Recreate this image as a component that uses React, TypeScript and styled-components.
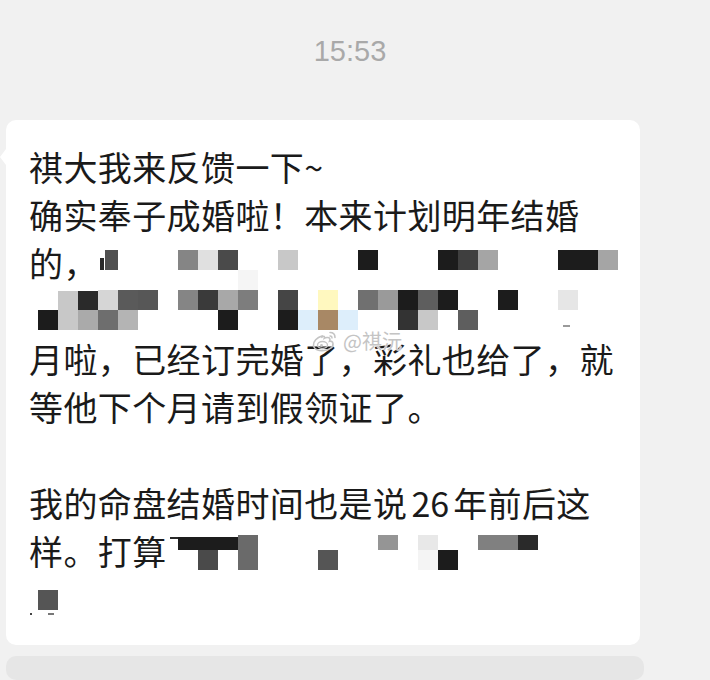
import React from "react";
import styled, { createGlobalStyle } from "styled-components";

const GlobalStyle = createGlobalStyle`
  html, body {
    margin: 0;
    padding: 0;
    background: #f1f1f1;
  }
  body {
    font-family: "Noto Sans CJK SC", "Noto Sans", sans-serif;
  }
`;

const Page = styled.div`
  width: 710px;
  height: 680px;
  overflow: hidden;
  background: #f1f1f1;
  display: flex;
  flex-direction: column;
`;

const TimeStamp = styled.div`
  width: 700px;
  margin-top: 34px;
  height: 34px;
  line-height: 34px;
  text-align: center;
  font-family: "Liberation Sans", Arial, sans-serif;
  font-size: 29px;
  color: #a9a9a9;
`;

const Bubble = styled.div`
  position: relative;
  margin-top: 52px;
  margin-left: 6px;
  width: 634px;
  box-sizing: border-box;
  padding: 23px 20px 22px 23px;
  background: #ffffff;
  border-radius: 10px;

  &::before {
    content: "";
    position: absolute;
    left: -6px;
    top: 29px;
    border-top: 8px solid transparent;
    border-bottom: 8px solid transparent;
    border-right: 6px solid #ffffff;
  }
`;

const Line = styled.div`
  height: 48px;
  line-height: 48px;
  font-size: 34px;
  letter-spacing: 0.4px;
  color: #1a1a1a;
  white-space: nowrap;
`;

const Num = styled.span`
  padding: 0 4px;
  letter-spacing: 0;
`;

const Mosaic = styled.svg`
  position: absolute;
  left: 0;
  top: 0;
  width: 634px;
  height: 525px;
  pointer-events: none;
`;

const Watermark = styled.div`
  position: absolute;
  left: 305px;
  top: 206px;
  display: flex;
  align-items: center;
  gap: 4px;
  font-size: 20px;
  color: #c4c4c4;
  text-shadow: 0 0 1px #fff, 0 0 1px #fff;
`;

const NextBubble = styled.div`
  margin-top: 11px;
  margin-left: 6px;
  width: 638px;
  height: 60px;
  background: #e6e6e6;
  border-radius: 10px;
`;

type Cell = [number, number, number, number, string];

// page coordinates; converted to bubble coordinates (bubble at 6,120)
const cells: Cell[] = [
  // row A
  [100, 258, 4, 12, "#2a2a2a"],
  [105, 250, 13, 20, "#505050"],
  [178, 250, 20, 20, "#858585"],
  [198, 250, 20, 20, "#e0e0e0"],
  [218, 250, 20, 20, "#4a4a4a"],
  [278, 250, 20, 20, "#c8c8c8"],
  [358, 250, 20, 20, "#1c1c1c"],
  [438, 250, 20, 20, "#1c1c1c"],
  [458, 250, 20, 20, "#3f3f3f"],
  [478, 250, 20, 20, "#a5a5a5"],
  [558, 250, 40, 20, "#1c1c1c"],
  [598, 250, 20, 20, "#a5a5a5"],
  // row B
  [238, 270, 20, 20, "#f5f5f5"],
  // row C
  [58, 291, 20, 19, "#c8c8c8"],
  [78, 291, 20, 19, "#2a2a2a"],
  [98, 290, 20, 20, "#d6d6d6"],
  [118, 290, 20, 20, "#5a5a5a"],
  [138, 290, 20, 20, "#575757"],
  [178, 290, 20, 20, "#858585"],
  [198, 290, 20, 20, "#3a3a3a"],
  [218, 290, 20, 20, "#a8a8a8"],
  [238, 290, 20, 20, "#7d7d7d"],
  [278, 290, 20, 20, "#454545"],
  [318, 290, 20, 20, "#fff8bf"],
  [358, 290, 20, 20, "#707070"],
  [378, 290, 20, 20, "#9a9a9a"],
  [398, 290, 20, 20, "#1c1c1c"],
  [418, 290, 20, 20, "#5e5e5e"],
  [438, 290, 20, 20, "#1c1c1c"],
  [498, 290, 20, 20, "#1c1c1c"],
  [558, 290, 20, 20, "#e6e6e6"],
  // row D
  [38, 310, 20, 20, "#1c1c1c"],
  [58, 310, 20, 20, "#c8c8c8"],
  [78, 310, 20, 20, "#aaaaaa"],
  [98, 310, 20, 20, "#6e6e6e"],
  [118, 310, 20, 20, "#b4b4b4"],
  [218, 310, 20, 20, "#1c1c1c"],
  [278, 310, 20, 20, "#1c1c1c"],
  [298, 310, 20, 20, "#ddeefb"],
  [318, 310, 20, 20, "#a88865"],
  [338, 310, 20, 20, "#ddeefb"],
  [398, 310, 20, 20, "#333333"],
  [418, 310, 20, 20, "#c8c8c8"],
  [458, 310, 20, 20, "#5e5e5e"],
  [563, 325, 7, 2, "#9a9a9a"],
  // line 9
  [170, 537, 8, 2, "#2a2a2a"],
  [178, 537, 60, 13, "#1c1c1c"],
  [238, 535, 20, 35, "#6a6a6a"],
  [198, 550, 20, 20, "#4a4a4a"],
  [318, 550, 20, 20, "#555555"],
  [378, 535, 20, 15, "#959595"],
  [418, 535, 20, 15, "#e8e8e8"],
  [418, 550, 20, 20, "#f4f4f4"],
  [438, 550, 20, 20, "#1c1c1c"],
  [478, 535, 40, 15, "#808080"],
  [518, 535, 20, 15, "#2a2a2a"],
  // line 10
  [38, 590, 20, 20, "#555555"],
  [30, 613, 2, 2, "#444444"],
  [48, 613, 6, 2, "#777777"],
];

const WeiboLogo = () => (
  <svg width="28" height="24" viewBox="0 0 28 24" fill="none">
    <path
      d="M11 7c-5 1.5-9 5.5-8.5 9.5C3 20.5 8 22 13 21.5c5.5-.5 9.5-3.5 9-7-.3-2-2-2.7-3.5-2.3 1-2.3.3-4-2.5-3.7-1.5.2-2.7.8-2.7.8.6-1.6.3-2.7-2.3-1.3z"
      stroke="#c4c4c4"
      strokeWidth="1.6"
    />
    <ellipse cx="11.5" cy="16" rx="5" ry="3.5" stroke="#c4c4c4" strokeWidth="1.4" />
    <circle cx="10.5" cy="16.5" r="1.4" fill="#c4c4c4" />
    <path d="M19 3.5c3 0 5 2 5 5" stroke="#c4c4c4" strokeWidth="1.6" strokeLinecap="round" />
    <path d="M19 7c1.2 0 2 .8 2 2" stroke="#c4c4c4" strokeWidth="1.4" strokeLinecap="round" />
  </svg>
);

export default function App() {
  return (
    <>
      <GlobalStyle />
      <Page>
        <TimeStamp>15:53</TimeStamp>
        <Bubble>
          <Line>祺大我来反馈一下~</Line>
          <Line>确实奉子成婚啦！本来计划明年结婚</Line>
          <Line>的，</Line>
          <Line />
          <Line>月啦，已经订完婚了，彩礼也给了，就</Line>
          <Line>等他下个月请到假领证了。</Line>
          <Line />
          <Line>
            我的命盘结婚时间也是说<Num>26</Num>年前后这
          </Line>
          <Line>样。打算</Line>
          <Line />
          <Mosaic viewBox="0 0 634 525">
            {cells.map(([x, y, w, h, c], i) => (
              <rect key={i} x={x - 6} y={y - 120} width={w} height={h} fill={c} />
            ))}
          </Mosaic>
          <Watermark>
            <WeiboLogo />
            <span>@祺沅</span>
          </Watermark>
        </Bubble>
        <NextBubble />
      </Page>
    </>
  );
}
